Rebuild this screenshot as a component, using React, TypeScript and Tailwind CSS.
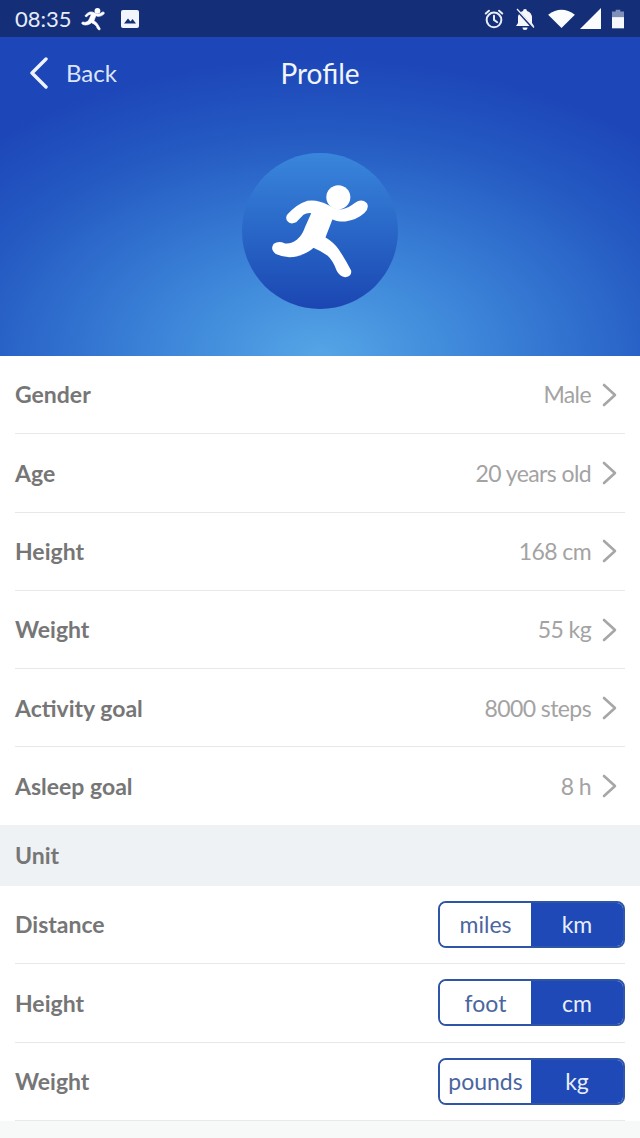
const font = "font-['Lato','Open_Sans',sans-serif]";

function Runner({ className }: { className?: string }) {
  return (
    <svg viewBox="66 39 468 468" className={className} fill="currentColor" stroke="currentColor" strokeWidth="9" strokeLinejoin="round">
      <circle cx="355" cy="172" r="36" stroke="none" />
      <path d="M206 226 Q232 196 262 187 Q292 182 322 199 Q345 214 368 212 Q388 208 408 192 Q424 180 437 192 Q443 204 430 216 Q408 236 376 240 Q352 241 335 232 L311 294 Q338 310 352 330 Q372 360 389 393 Q391 406 376 407 Q362 405 354 390 Q342 358 326 344 Q305 328 280 318 Q262 336 232 344 Q198 352 170 338 Q156 328 164 315 Q176 306 192 314 Q214 318 234 302 Q250 288 258 266 L280 216 Q262 212 248 220 Q236 232 226 243 Q212 250 205 240 Q201 232 206 226 Z" />
    </svg>
  );
}

function Chevron() {
  return (
    <svg viewBox="0 0 15 24" className="w-[15px] h-[24px] ml-[11px] mr-[8px] text-[#a6a6a6]" fill="none" stroke="currentColor" strokeWidth="2.6" strokeLinecap="round" strokeLinejoin="round">
      <path d="M2 2 L13 12 L2 22" />
    </svg>
  );
}

const labelCls = "text-[23px] font-bold text-[#767676]";

function InfoRow({ label, value, last }: { label: string; value: string; last?: boolean }) {
  return (
    <div className={`mx-[15px] flex items-center justify-between ${last ? "h-[78px]" : "h-[78.3px] border-b border-[#e8e8e8]"}`}>
      <span className={labelCls}>{label}</span>
      <div className="flex items-center">
        <span className="text-[23px] tracking-[-0.6px] text-[#a3a3a3]">{value}</span>
        <Chevron />
      </div>
    </div>
  );
}

function UnitRow({ label, a, b }: { label: string; a: string; b: string }) {
  return (
    <div className="mx-[15px] h-[78.3px] flex items-center justify-between border-b border-[#e8e8e8]">
      <span className={labelCls}>{label}</span>
      <div className="flex w-[187px] h-[47px] rounded-[8px] overflow-hidden border-2 border-[#2f55a6] text-[23px]">
        <span className="w-[91px] flex items-center justify-center bg-white text-[#4a669f]">{a}</span>
        <span className="flex-1 flex items-center justify-center bg-[#1f49b6] text-[#e8eefa]">{b}</span>
      </div>
    </div>
  );
}

export default function App() {
  return (
    <div className={`w-[640px] h-[1138px] overflow-hidden bg-white flex flex-col ${font}`}>
      <div className="h-[37px] shrink-0 bg-[#142f78] flex items-center justify-between pl-[15px] pr-[16px] text-[#e6ecf8]">
        <div className="flex items-center">
          <span className="text-[22px] leading-none">08:35</span>
          <Runner className="w-[38px] h-[38px] ml-[2px] text-white" />
          <svg viewBox="0 0 20 20" className="w-[20px] h-[20px] ml-[8px]">
            <rect x="1" y="1" width="18" height="18" rx="2" fill="#f2f5fb" />
            <path d="M4 14.5 L8 9.5 L10.5 12.5 L12.5 10 L16 14.5 Z" fill="#142f78" />
          </svg>
        </div>
        <div className="flex items-center">
          <svg viewBox="0 0 24 24" className="w-[22px] h-[22px]" fill="none" stroke="#e6ecf8" strokeWidth="2.2" strokeLinecap="round">
            <circle cx="12" cy="13" r="8" />
            <path d="M12 8.5 V13 L15.5 15.5 M3 6 L6.5 3 M21 6 L17.5 3" />
          </svg>
          <svg viewBox="0 0 24 24" className="w-[24px] h-[24px] ml-[8px]" fill="#f4f6fb">
            <path d="M12 2 a2 2 0 0 1 2 2 q5 1.5 5 7 v5 l2 3 H3 l2 -3 v-5 q0 -5.5 5 -7 a2 2 0 0 1 2 -2 Z M9.5 20.5 h5 a2.5 2.5 0 0 1 -5 0 Z" />
            <path d="M3 2 L21 22" stroke="#142f78" strokeWidth="2.6" />
            <path d="M4 2 L21 20.5" stroke="#f4f6fb" strokeWidth="1.2" />
          </svg>
          <svg viewBox="0 0 30 22" className="w-[29px] h-[21px] ml-[10px]" fill="#fbfcfe">
            <path d="M15 21 L1 7 Q15 -3.5 29 7 Z" />
          </svg>
          <svg viewBox="0 0 21 21" className="w-[21px] h-[21px] ml-[4px]" fill="#fbfcfe">
            <path d="M0 21 L21 0 V21 Z" />
          </svg>
          <svg viewBox="0 0 13 20" className="w-[12px] h-[20px] ml-[11px]">
            <path d="M4 0 H9 V2 H13 V20 H0 V2 H4 Z" fill="#7f8fb8" />
            <rect x="0" y="8" width="13" height="12" fill="#f6f8fc" />
          </svg>
        </div>
      </div>

      <div className="h-[319px] shrink-0 bg-[radial-gradient(ellipse_480px_300px_at_50%_100%,#55a5e6_0%,#3b83d8_35%,#2459c2_75%,#1d46b8_100%)] flex flex-col text-white">
        <div className="grid grid-cols-3 items-center h-[71px]">
          <div className="flex items-center pl-[29px]">
            <svg viewBox="0 0 20 32" className="w-[20px] h-[32px]" fill="none" stroke="#eef3fc" strokeWidth="3.4" strokeLinecap="round" strokeLinejoin="round">
              <path d="M17 2 L3 16 L17 30" />
            </svg>
            <span className="ml-[17px] text-[24px] text-[#dce6f8]">Back</span>
          </div>
          <span className="text-center text-[28px] text-[#f0f4fc]">Profile</span>
          <span />
        </div>
        <div className="flex justify-center mt-[45px]">
          <div className="w-[156px] h-[156px] rounded-full bg-gradient-to-b from-[#3a86dc] to-[#1c46b2] text-white">
            <Runner className="w-[156px] h-[156px]" />
          </div>
        </div>
      </div>

      <InfoRow label="Gender" value="Male" />
      <InfoRow label="Age" value="20 years old" />
      <InfoRow label="Height" value="168 cm" />
      <InfoRow label="Weight" value="55 kg" />
      <InfoRow label="Activity goal" value="8000 steps" />
      <InfoRow label="Asleep goal" value="8 h" last />

      <div className={`h-[60.5px] shrink-0 bg-[#eef2f4] flex items-center px-[15px] ${labelCls}`}>Unit</div>

      <UnitRow label="Distance" a="miles" b="km" />
      <UnitRow label="Height" a="foot" b="cm" />
      <UnitRow label="Weight" a="pounds" b="kg" />
      <div className="flex-1 bg-[#f7f8f8]" />
    </div>
  );
}
